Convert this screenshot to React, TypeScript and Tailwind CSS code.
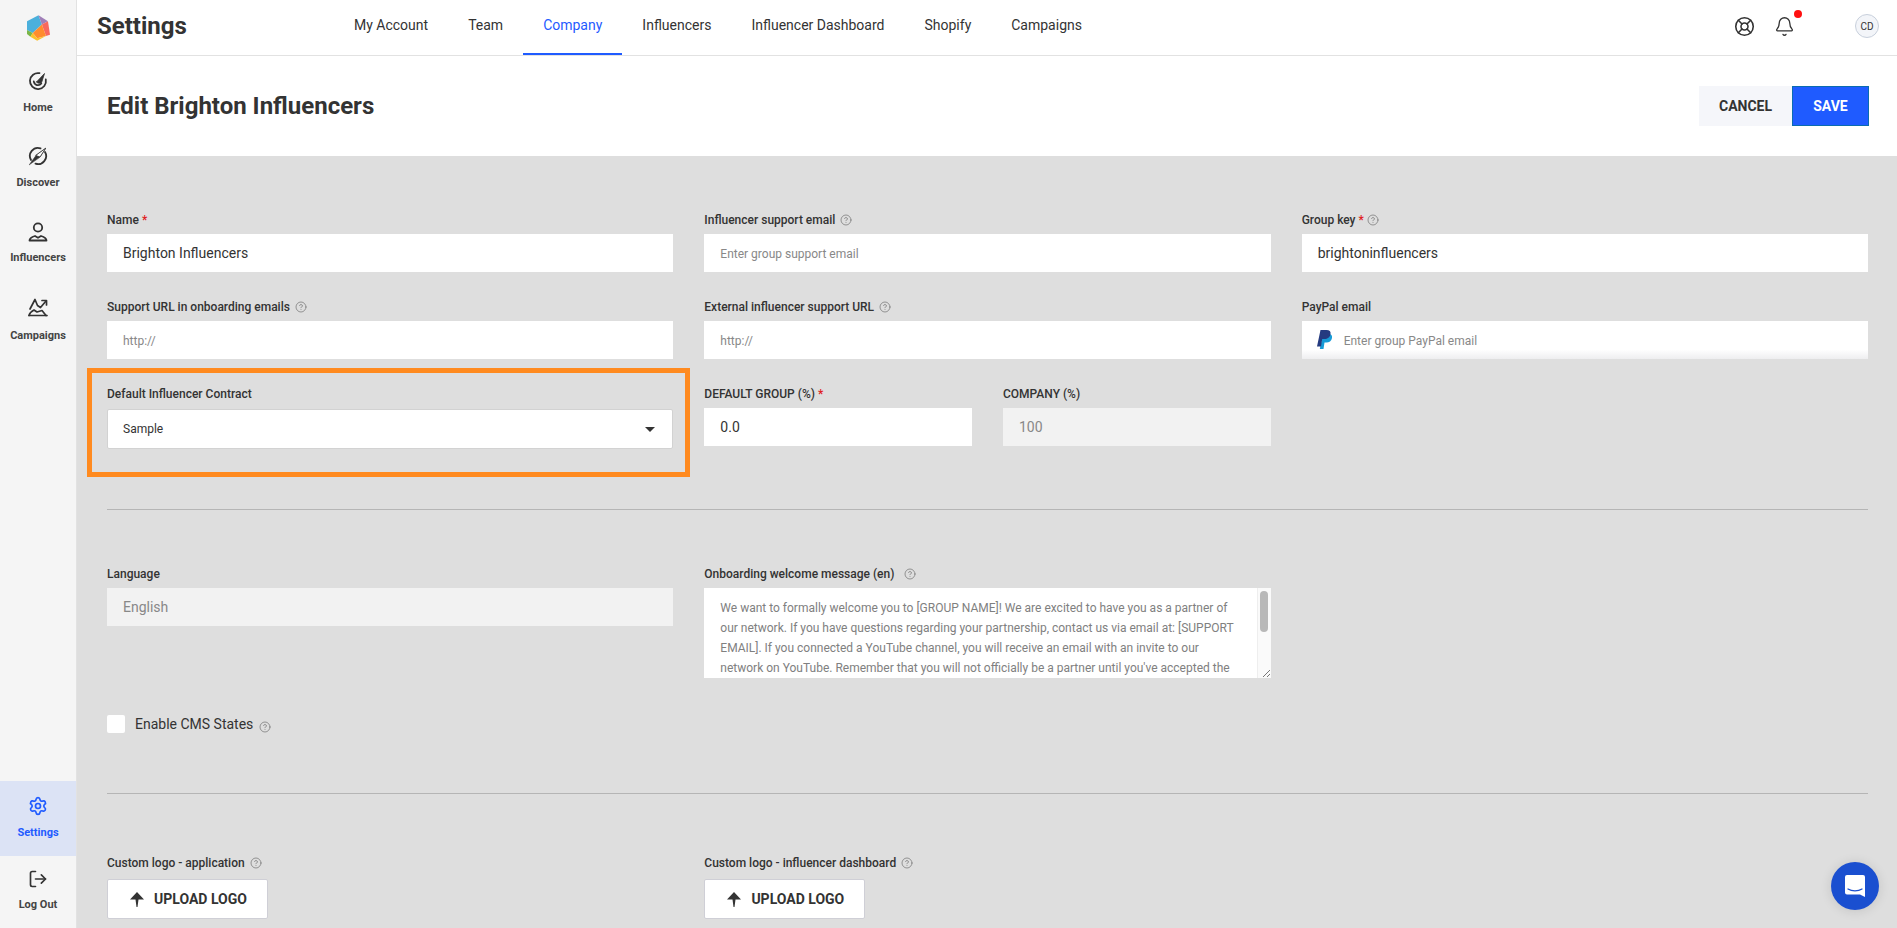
import { ReactNode } from 'react';
import { CircleHelp, LifeBuoy, Bell, Settings as SettingsIcon, LogOut } from 'lucide-react';

const NAV = ['My Account', 'Team', 'Company', 'Influencers', 'Influencer Dashboard', 'Shopify', 'Campaigns'];

const WELCOME =
  "We want to formally welcome you to [GROUP NAME]! We are excited to have you as a partner of our network. If you have questions regarding your partnership, contact us via email at: [SUPPORT EMAIL]. If you connected a YouTube channel, you will receive an email with an invite to our network on YouTube. Remember that you will not officially be a partner until you've accepted the";

function Logo() {
  return (
    <svg width="23" height="26" viewBox="78 44 68 76">
      <polygon points="78,62 112,44 122,72 95,97 78,88" fill="#4bb0dc" />
      <polygon points="112,44 140,62 122,72" fill="#a07fb8" />
      <polygon points="140,62 146,102 134,106 122,72" fill="#f8685e" />
      <polygon points="122,72 134,106 108,112 95,97" fill="#ff8c2e" />
      <polygon points="78,88 95,97 88,108 78,100" fill="#7ab648" />
      <polygon points="88,108 95,97 108,112 134,106 108,120" fill="#fcc02e" />
    </svg>
  );
}

function HomeIcon() {
  return (
    <svg width="20" height="20" viewBox="0 0 20 20" fill="none" stroke="#333" strokeWidth="1.8" strokeLinecap="round">
      <path d="M11.500 2.200A8 8 0 1 0 17.800 8.500" />
      <path d="M5.800 10.500a4.200 4.200 0 0 0 7.500 2" />
      <path d="M8.500 11l8-8.500-2.800 8.800c-1 1.400-4.200 1.200-5.200-.3z" fill="#333" strokeWidth="0.8" strokeLinejoin="round" />
    </svg>
  );
}

function DiscoverIcon() {
  return (
    <svg width="20" height="20" viewBox="0 0 20 20" fill="none" stroke="#333" strokeWidth="1.800" strokeLinecap="round">
      <path d="M12.500 2.400A8 8 0 0 0 3 14" />
      <path d="M7.500 17.600A8 8 0 0 0 17 6" />
      <path d="M1.500 18.500L8 9.500 17.500 2.500 12 11z" fill="#333" strokeWidth="0.6" strokeLinejoin="round" />
      <path d="M8 9.500L12 11 17.500 2.500z" fill="#fff" strokeWidth="0.8" strokeLinejoin="round" />
    </svg>
  );
}

function InfluencersIcon() {
  return (
    <svg width="20" height="20" viewBox="0 0 20 20" fill="none" stroke="#333" strokeWidth="1.800" strokeLinecap="round" strokeLinejoin="round">
      <circle cx="10" cy="5.500" r="4.200" />
      <path d="M1.500 18.500h17c0-2.500-2.500-3.500-5.500-4.500l-3 1.800L7 14c-3 1-5.500 2-5.500 4.500z" />
    </svg>
  );
}

function CampaignsIcon() {
  return (
    <svg width="20" height="20" viewBox="0 0 20 20" fill="none" stroke="#333" strokeWidth="1.700" strokeLinecap="round" strokeLinejoin="round">
      <path d="M1 18.500h18" />
      <path d="M1 18.500c.5-2 3-4.500 5-5.500l3 2 5-1.500 4 5" />
      <path d="M2 12l5-9.500 2.500 6 3 2L18 4" />
      <path d="M14 3.500h4.500V8" />
    </svg>
  );
}

function PayPalIcon() {
  return (
    <svg width="16" height="20" viewBox="0 0 16 20">
      <path d="M6 4h6c2 0 3.500 1.500 3 4-.5 3-3 4.500-5.500 4.500H7.500L6.500 19H2.800z" fill="#179bd7" />
      <path d="M3.500 0h6c3 0 4.500 1.500 4 4-.5 3.500-3 5-6 5H5.200L4 16.500H0z" fill="#253b80" />
    </svg>
  );
}

function UploadArrow() {
  return (
    <svg width="14" height="15" viewBox="0 0 14 15" fill="#333">
      <path d="M7 0l7 7.500H8.500L7.500 15h-1l-1-7.500H0z" />
    </svg>
  );
}

function SideItem({ icon, label, className = 'h-[75px] pt-[15px] text-[#444]', labelClass = 'mt-[10px]' }: {
  icon: ReactNode;
  label: string;
  className?: string;
  labelClass?: string;
}) {
  return (
    <div className={`flex flex-col items-center text-[11px] font-bold ${className}`}>
      <div className="flex h-5 items-center">{icon}</div>
      <div className={`leading-[14px] ${labelClass}`}>{label}</div>
    </div>
  );
}

function Help({ className = 'ml-[5px]' }: { className?: string }) {
  return <CircleHelp size={12} strokeWidth={1.5} className={`inline-block text-[#777] ${className}`} />;
}

function Label({ text, required, help, className = 'mb-[6px]' }: { text: string; required?: boolean; help?: boolean; className?: string }) {
  return (
    <label className={`flex h-[16px] items-center text-[12px] font-medium leading-[16px] text-[#333] ${className}`}>
      <span>{text}</span>
      {required && <span className="ml-[3px] text-[#e02020]">*</span>}
      {help && <Help className={required ? 'ml-[3px]' : 'ml-[5px]'} />}
    </label>
  );
}

function Field({ label, required, help, value, placeholder, disabled }: {
  label: string;
  required?: boolean;
  help?: boolean;
  value?: string;
  placeholder?: string;
  disabled?: boolean;
}) {
  return (
    <div className="min-w-0">
      <Label text={label} required={required} help={help} />
      <input
        readOnly
        value={value}
        placeholder={placeholder}
        className={`block h-[38px] w-full px-4 text-[14px] outline-none placeholder:text-[12px] placeholder:text-[#888] ${disabled ? 'bg-[#f2f2f2] text-[#888]' : 'bg-white text-[#333]'}`}
      />
    </div>
  );
}

function UploadButton() {
  return (
    <button className="flex h-[40px] w-[161px] items-center justify-center gap-[10px] rounded-[2px] border border-[#cfcfd6] bg-white pl-[2px] text-[14px] font-bold text-[#333]">
      <UploadArrow />
      UPLOAD LOGO
    </button>
  );
}

export default function App() {
  return (
    <div className="relative flex h-[928px] overflow-hidden bg-white font-['Roboto',sans-serif] text-[#333]">
      {/* Sidebar */}
      <aside className="flex w-[77px] shrink-0 flex-col border-r border-[#e2e2e2] bg-[#f5f5f5]">
        <div className="flex h-[56px] items-center justify-center">
          <Logo />
        </div>
        <SideItem icon={<HomeIcon />} label="Home" />
        <SideItem icon={<DiscoverIcon />} label="Discover" />
        <SideItem icon={<InfluencersIcon />} label="Influencers" className="h-[75px] pt-[16px] text-[#444]" labelClass="mt-[9px]" />
        <SideItem icon={<CampaignsIcon />} label="Campaigns" className="h-[75px] pt-[16px] text-[#444]" labelClass="mt-[12px]" />
        <div className="flex-1" />
        <SideItem
          icon={<SettingsIcon size={20} strokeWidth={2} className="text-[#1f5bff]" />}
          label="Settings"
          className="h-[75px] bg-[#dce3f5] pt-[15px] text-[#1f5bff]"
        />
        <SideItem
          icon={<LogOut size={20} strokeWidth={2} className="text-[#333]" />}
          label="Log Out"
          className="h-[72px] pt-[13px] text-[#444]"
          labelClass="mt-[9px]"
        />
      </aside>

      <div className="flex min-w-0 flex-1 flex-col">
        {/* Top bar */}
        <header className="flex h-[56px] shrink-0 items-center border-b border-[#e2e2e2] pl-[20px] pr-[18px]">
          <div className="w-[237px] pb-[4px] text-[24px] font-bold">Settings</div>
          <nav className="flex h-full">
            {NAV.map((item) => (
              <div
                key={item}
                className={`flex h-[55px] items-center border-b-2 px-5 pb-[2px] text-[14px] ${item === 'Company' ? 'border-[#1f5bff] text-[#1f5bff]' : 'border-transparent text-[#333]'}`}
              >
                {item}
              </div>
            ))}
          </nav>
          <div className="ml-auto flex items-center pb-[3px]">
            <LifeBuoy size={21} strokeWidth={1.8} />
            <div className="relative ml-[19px]">
              <Bell size={21} strokeWidth={1.5} />
              <span className="absolute -right-[7px] -top-[6px] h-2 w-2 rounded-full bg-[#ff1010]" />
            </div>
            <div className="ml-[60px] flex h-6 w-6 items-center justify-center rounded-full border border-[#c8d0dc] bg-[#f3f5f9] text-[10px]">
              CD
            </div>
          </div>
        </header>

        {/* Title bar */}
        <div className="flex h-[100px] shrink-0 items-center justify-between bg-white pl-[30px] pr-[28px]">
          <h1 className="text-[24px] font-bold">Edit Brighton Influencers</h1>
          <div className="flex">
            <button className="h-10 w-[93px] bg-[#f5f6fa] text-[14px] font-bold">CANCEL</button>
            <button className="h-10 w-[77px] border border-[#0a6cb0] bg-[#1f5bff] text-[14px] font-bold text-white">SAVE</button>
          </div>
        </div>

        {/* Form */}
        <main className="flex-1 bg-[#dedede] pl-[30px] pr-[29px] pt-[56px]">
          <div className="grid grid-cols-3 gap-x-[31px] gap-y-[27px]">
            <Field label="Name" required value="Brighton Influencers" />
            <Field label="Influencer support email" help placeholder="Enter group support email" />
            <Field label="Group key" required help value="brightoninfluencers" />
            <Field label="Support URL in onboarding emails" help placeholder="http://" />
            <Field label="External influencer support URL" help placeholder="http://" />
            <div className="min-w-0">
              <Label text="PayPal email" />
              <div className="flex h-[38px] items-center bg-gradient-to-b from-white from-75% to-[#eeeef0] pl-[15px]">
                <PayPalIcon />
                <span className="ml-[11px] pt-[1px] text-[12px] text-[#888]">Enter group PayPal email</span>
              </div>
            </div>
            <div className="min-w-0">
              <Label text="Default Influencer Contract" className="mb-[7px]" />
              <div className="flex h-[40px] items-center justify-between rounded-[2px] border border-[#d2d2d2] bg-white pl-[15px] pr-[17px] text-[12px]">
                <span>Sample</span>
                <span className="h-0 w-0 border-x-[5px] border-t-[5px] border-x-transparent border-t-[#333]" />
              </div>
            </div>
            <div className="grid min-w-0 grid-cols-2 gap-x-[31px]">
              <Field label="DEFAULT GROUP (%)" required value="0.0" />
              <Field label="COMPANY (%)" value="100" disabled />
            </div>
          </div>

          <hr className="mb-[56px] mt-[60px] border-t border-[#b5b5b5]" />

          <div className="grid grid-cols-3 gap-x-[31px]">
            <Field label="Language" value="English" disabled />
            <div className="min-w-0">
              <label className="mb-[6px] flex h-[16px] items-center text-[12px] font-medium leading-[16px] text-[#333]">
                <span>Onboarding welcome message (en)</span>
                <Help className="ml-[10px]" />
              </label>
              <div className="relative h-[90px] overflow-hidden bg-white py-[10px] pl-4 pr-[30px] text-[12px] leading-[20px] text-[#808080]">
                {WELCOME}
                <div className="absolute bottom-0 right-0 top-0 w-[14px] border-l border-[#eeeeee] bg-[#fafafa]">
                  <div className="mx-auto mt-[3px] h-[41px] w-[8px] rounded-full bg-[#b8b8b8]" />
                </div>
                <svg className="absolute bottom-0 right-0" width="14" height="14" viewBox="0 0 14 14" stroke="#777" strokeWidth="1">
                  <path d="M13 6L6 13M13 10l-3 3" />
                </svg>
              </div>
            </div>
          </div>

          <div className="mt-[37px] flex items-start">
            <span className="h-[18px] w-[18px] rounded-[2px] bg-white" />
            <span className="ml-[10px] pt-[1px] text-[14px] leading-[16px] text-[#333]">Enable CMS States</span>
            <Help className="ml-[6px] mt-[6px]" />
          </div>

          <hr className="mb-[61px] mt-[60px] border-t border-[#b5b5b5]" />

          <div className="grid grid-cols-3 gap-x-[31px]">
            <div>
              <Label text="Custom logo - application" help className="mb-[8px]" />
              <UploadButton />
            </div>
            <div>
              <Label text="Custom logo - influencer dashboard" help className="mb-[8px]" />
              <UploadButton />
            </div>
          </div>
        </main>
      </div>

      {/* Annotation highlighting the contract field */}
      <div className="absolute left-[87px] top-[368px] h-[109px] w-[603px] border-[5px] border-[#ff8a1f]" />

      {/* Chat launcher */}
      <div className="absolute bottom-[18px] right-[18px] flex h-[48px] w-[48px] items-center justify-center rounded-full bg-[#1a4fd0] shadow-[0_1px_12px_rgba(0,0,0,0.12)]">
        <svg width="22" height="24" viewBox="0 0 22 24">
          <path d="M3 1h16a2 2 0 0 1 2 2v20l-5-2.500H3a2 2 0 0 1-2-2V3a2 2 0 0 1 2-2z" fill="#fff" />
          <path d="M4 15c4 2.500 10 2.500 14 0" fill="none" stroke="#1a4fd0" strokeWidth="1.300" strokeLinecap="round" />
        </svg>
      </div>
    </div>
  );
}
